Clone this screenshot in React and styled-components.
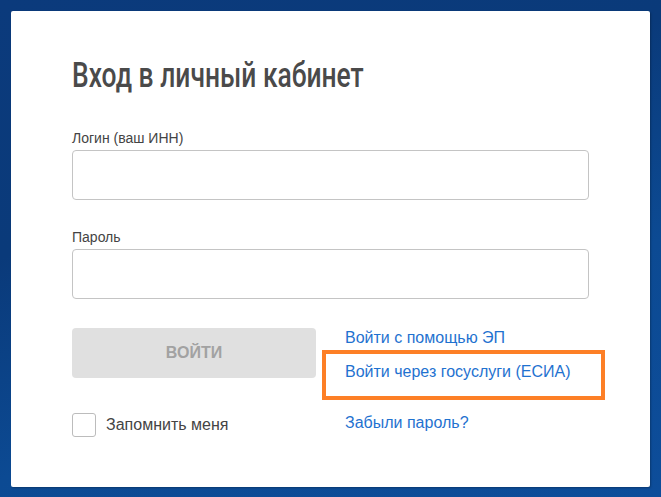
import styled, { createGlobalStyle } from 'styled-components';

const GlobalStyle = createGlobalStyle`
    html, body {
        margin: 0;
        padding: 0;
    }
    body {
        width: 661px;
        height: 497px;
        overflow: hidden;
        font-family: "Liberation Sans", Arial, sans-serif;
        background: linear-gradient(160deg, #0b3a7c 0%, #0a3a7a 35%, #0c4a93 65%, #0d4d9a 100%);
    }
`;

function App() {
    return (
        <>
            <GlobalStyle />
            <Page>
                <Card>
                    <TitleRow>
                        <Title>Вход в личный кабинет</Title>
                    </TitleRow>

                    <Field>
                        <Label>Логин (ваш ИНН)</Label>
                        <Input type="text" />
                    </Field>
                    <Field>
                        <Label>Пароль</Label>
                        <Input type="password" />
                    </Field>

                    <Actions>
                        <LoginButton disabled>Войти</LoginButton>
                        <Links>
                            <Link href="#">Войти с помощью ЭП</Link>
                            <Highlight>
                                <Link href="#">Войти через госуслуги (ЕСИА)</Link>
                            </Highlight>
                        </Links>
                        <Remember>
                            <Checkbox type="checkbox" />
                            Запомнить меня
                        </Remember>
                        <Link href="#">Забыли пароль?</Link>
                    </Actions>
                </Card>
            </Page>
        </>
    );
}

export default App;

const Page = styled.div`
    padding: 11px;
`;

const Card = styled.div`
    box-sizing: border-box;
    width: 639px;
    height: 476px;
    background: #fff;
    border-radius: 2px;
    box-shadow: 1px 1px 2px rgba(0, 0, 0, 0.25);
    padding: 45px 61px 0 61px;
`;

const TitleRow = styled.div`
    height: 40px;
    margin-bottom: 34px;
`;

// no condensed face is installed, so the narrow DIN-like heading is squeezed
const Title = styled.h1`
    display: inline-block;
    margin: 0;
    font-family: Roboto, "Liberation Sans", sans-serif;
    font-weight: 500;
    font-size: 35px;
    line-height: 40px;
    color: #4a4a4a;
    transform: scaleX(0.755);
    transform-origin: left center;
    white-space: nowrap;
`;

const Field = styled.div`
    display: flex;
    flex-direction: column;
    margin-bottom: 29px;
`;

const Label = styled.label`
    font-size: 14px;
    line-height: 16px;
    color: #444;
    margin-bottom: 4px;
`;

const Input = styled.input`
    box-sizing: border-box;
    width: 517px;
    height: 50px;
    border: 1px solid #c4c4c4;
    border-radius: 4px;
    padding: 0 14px;
    font-size: 16px;
    outline: none;
`;

const Actions = styled.div`
    display: grid;
    grid-template-columns: 244px 1fr;
    column-gap: 29px;
    row-gap: 13px;
    align-items: start;
`;

const LoginButton = styled.button`
    height: 50px;
    border: none;
    border-radius: 4px;
    background: #e0e0e0;
    color: #a2a2a2;
    font-family: "Liberation Sans", Arial, sans-serif;
    font-weight: bold;
    font-size: 16px;
    text-transform: uppercase;
`;

const Links = styled.div`
    display: flex;
    flex-direction: column;
    gap: 2px;
`;

const Link = styled.a`
    font-size: 16px;
    line-height: 20px;
    color: #1f72d0;
    text-decoration: none;
`;

const Highlight = styled.div`
    margin-left: -23px;
    width: 283px;
    box-sizing: border-box;
    height: 50px;
    border: 4px solid #fd7f26;
    padding: 8px 0 0 19px;
`;

const Remember = styled.label`
    display: flex;
    align-items: center;
    gap: 10px;
    font-size: 16px;
    line-height: 20px;
    color: #444;
`;

const Checkbox = styled.input`
    appearance: none;
    margin: 0;
    width: 24px;
    height: 24px;
    border: 1px solid #bcbcbc;
    border-radius: 3px;
    background: #fff;
`;
